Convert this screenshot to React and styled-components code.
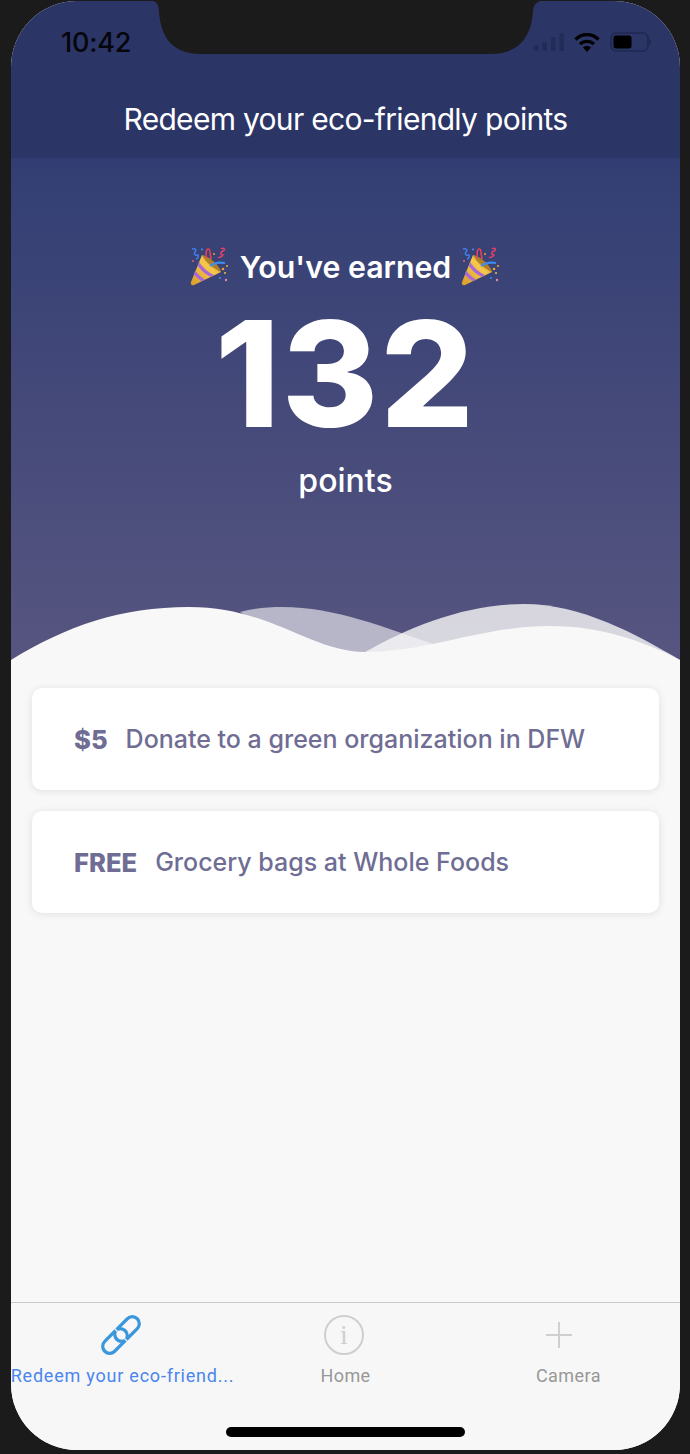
import React from 'react';
import styled, { createGlobalStyle } from 'styled-components';

const GlobalStyle = createGlobalStyle`
    html, body {
        margin: 0;
        padding: 0;
        background-color: #1b1b1b;
    }
`;

const Frame = styled.div`
    position: relative;
    width: 690px;
    height: 1454px;
    box-sizing: border-box;
    padding: 1px 10px 4px 11px;
    background-color: #1b1b1b;
    font-family: Inter, "Liberation Sans", sans-serif;
`;

const Screen = styled.div`
    position: relative;
    height: 100%;
    display: flex;
    flex-direction: column;
    overflow: hidden;
    border-radius: 66px;
    background-color: #f8f8f8;
`;

const Notch = styled.svg`
    position: absolute;
    top: -1px;
    left: 139px;
`;

const Header = styled.header`
    height: 157px;
    flex: none;
    box-sizing: border-box;
    background-color: #2b3566;
`;

const StatusBar = styled.div`
    height: 82px;
    display: flex;
    align-items: center;
    justify-content: space-between;
    box-sizing: border-box;
    padding: 0 28px 0 50px;
    margin-bottom: 16px;
`;

const Clock = styled.span`
    font-size: 27px;
    font-weight: 500;
    color: #05060c;
    letter-spacing: -0.2px;
`;

const StatusIcons = styled.div`
    display: flex;
    align-items: center;
    gap: 10px;
`;

const Title = styled.h1`
    margin: 0;
    text-align: center;
    color: #ffffff;
    font-size: 30px;
    line-height: 40px;
    font-weight: 400;
    letter-spacing: -0.7px;
`;

const Hero = styled.section`
    height: 502px;
    flex: none;
    display: flex;
    flex-direction: column;
    align-items: center;
    justify-content: space-between;
    background: linear-gradient(180deg, #323e73 0%, #575580 100%);
    color: #ffffff;
`;

const Summary = styled.div`
    display: flex;
    flex-direction: column;
    align-items: center;
    padding-top: 89px;
`;

const Earned = styled.div`
    display: flex;
    align-items: center;
    gap: 10px;
    height: 40px;
    font-size: 30.3px;
    font-weight: 600;
`;

const Points = styled.div`
    height: 150px;
    margin-top: 12px;
    font-size: 147px;
    line-height: 150px;
    font-weight: 800;
    letter-spacing: 2px;
`;

const PointsLabel = styled.div`
    margin-top: 12px;
    font-size: 32px;
    line-height: 40px;
    font-weight: 500;
`;

const Waves = styled.svg`
    display: block;
    flex: none;
`;

const Rewards = styled.main`
    flex: 1;
    display: flex;
    flex-direction: column;
    gap: 21px;
    padding: 28px 21px 0;
`;

const RewardCard = styled.div`
    height: 102px;
    display: flex;
    align-items: center;
    gap: 18px;
    box-sizing: border-box;
    padding-left: 42px;
    background-color: #ffffff;
    border-radius: 10px;
    box-shadow: 0 1px 8px rgba(0, 0, 0, 0.1);
    color: #6f6d93;
`;

const Price = styled.span`
    font-size: 25.6px;
    font-weight: 800;
`;

const Description = styled.span`
    font-size: 25px;
    font-weight: 500;
`;

const TabBar = styled.nav`
    position: relative;
    height: 148px;
    flex: none;
    display: grid;
    grid-template-columns: repeat(3, 1fr);
    box-sizing: border-box;
    border-top: 1px solid #c9c9c9;
    background-color: #f7f7f7;
`;

const Tab = styled.div`
    min-width: 0;
    display: flex;
    flex-direction: column;
    align-items: center;
    padding-top: 11px;
`;

const TabIcon = styled.div`
    height: 41px;
    display: flex;
    align-items: center;
    justify-content: center;
    margin-right: ${(props) => props.$nudge || 0}px;
`;

const TabLabel = styled.div`
    margin-top: 10px;
    font-family: Roboto, "Liberation Sans", sans-serif;
    font-size: 18px;
    line-height: 22px;
    letter-spacing: ${(props) => (props.$active ? '0.78px' : '0.45px')};
    white-space: nowrap;
    color: ${(props) => (props.$active ? '#4a86ee' : '#979797')};
`;

const InfoCircle = styled.div`
    width: 40px;
    height: 40px;
    display: flex;
    align-items: center;
    justify-content: center;
    box-sizing: border-box;
    border: 2px solid #cfcfcf;
    border-radius: 50%;
    color: #cfcfcf;
    font-family: "Liberation Serif", serif;
    font-size: 28px;
`;

const HomeIndicator = styled.div`
    position: absolute;
    left: 215px;
    bottom: 13px;
    width: 239px;
    height: 10px;
    border-radius: 5px;
    background-color: #000000;
`;

function PartyPopper() {
    return (
        <svg width="40" height="40" viewBox="0 0 40 40">
            <defs>
                <linearGradient id="cone" x1="0" y1="1" x2="1" y2="0">
                    <stop offset="0" stopColor="#d99b2b" />
                    <stop offset="0.6" stopColor="#f5c84a" />
                    <stop offset="1" stopColor="#c98a24" />
                </linearGradient>
            </defs>
            <path d="M1 35 C0 37 2 39 4 38 L31 25 C29 18 20 10 12 8 Z" fill="url(#cone)" />
            <path d="M5 24 C9 28 12 31 15 32.5 L11.5 34.2 C9 32.5 6 30 3.8 27.5 Z" fill="#a868d8" />
            <path d="M9 15 C13 21 19 26 24 28 L20.5 29.8 C15.5 27.5 11 23.5 7.8 19 Z" fill="#a868d8" />
            <path d="M12 8 C20 10 29 18 31 25 C24 22 15 15 12 8 Z" fill="#8a5a1c" opacity="0.6" />
            <path d="M20 19 C24 16 29 15 35 16" fill="none" stroke="#3f8cf0" strokeWidth="2" />
            <path d="M16 11 C17 8 15 6 17 3 C18 1 20 2 20 5 C20 8 21 10 21 12" fill="none" stroke="#e8405a" strokeWidth="1.6" />
            <path d="M2 2 C5 1 7 3 5 5 C3 7 6 9 8 8 C9 10 7 12 6 12" fill="none" stroke="#3f7fe8" strokeWidth="1.5" />
            <path d="M31 2 C34 0 36 3 33 4 C30 5 30 8 33 8 C32 10 29 11 28 10" fill="none" stroke="#e8406a" strokeWidth="1.5" />
            <circle cx="12" cy="2.5" r="1.1" fill="#3f8cf0" />
            <circle cx="24" cy="7" r="1" fill="#f0a030" />
            <circle cx="3" cy="14" r="1.1" fill="#d85a80" />
            <circle cx="33" cy="22" r="1.3" fill="#f0a030" />
            <circle cx="37" cy="19" r="1.1" fill="#f0a030" />
            <circle cx="30" cy="31" r="1" fill="#3f8cf0" />
            <circle cx="35" cy="26" r="1" fill="#f0c040" />
            <circle cx="36" cy="33" r="1.2" fill="#e888a8" />
        </svg>
    );
}

export default function App() {
    return (
        <Frame>
            <GlobalStyle />
            <Screen>
                <Header>
                    <StatusBar>
                        <Clock>10:42</Clock>
                        <StatusIcons>
                            {/* signal bars */}
                            <svg width="30" height="18" viewBox="0 0 30 18" fill="#222c58">
                                <rect x="0" y="12" width="4.5" height="6" rx="1.5" />
                                <rect x="8.5" y="9" width="4.5" height="9" rx="1.5" />
                                <rect x="17" y="4" width="4.5" height="14" rx="1.5" />
                                <rect x="25.5" y="0" width="4.5" height="18" rx="1.5" />
                            </svg>
                            {/* wifi */}
                            <svg width="26" height="20" viewBox="0 0 26 20">
                                <path d="M1.5 7.5 C8 1 18 1 24.5 7.5" fill="none" stroke="#000" strokeWidth="3.4" />
                                <path d="M6 12 C10 8.5 16 8.5 20 12" fill="none" stroke="#000" strokeWidth="3.4" />
                                <path d="M9 15.5 L13 20 L17 15.5 C15 13.5 11 13.5 9 15.5 Z" fill="#000" />
                            </svg>
                            {/* battery */}
                            <svg width="42" height="20" viewBox="0 0 42 20">
                                <rect x="1" y="1" width="37" height="18" rx="5" fill="none" stroke="#1f2850" strokeWidth="1.6" />
                                <rect x="3.5" y="3.5" width="18" height="13" rx="2.5" fill="#000" />
                                <path d="M39.5 7 C41.5 8 41.5 12 39.5 13 Z" fill="#1f2850" />
                            </svg>
                        </StatusIcons>
                    </StatusBar>
                    <Title>Redeem your eco-friendly points</Title>
                </Header>

                <Hero>
                    <Summary>
                        <Earned>
                            <PartyPopper />
                            <span>You've earned</span>
                            <PartyPopper />
                        </Earned>
                        <Points>132</Points>
                        <PointsLabel>points</PointsLabel>
                    </Summary>
                    <Waves width="669" height="60" viewBox="0 0 669 60">
                        <path
                            d="M229 12 C245 8 258 7 271 7 C325 7 375 28 425 45 L430 60 L300 60 Z"
                            fill="#f8f8f8"
                            opacity="0.6"
                        />
                        <path
                            d="M354 52 C400 26 455 4 513 4 C570 4 625 34 669 60 L354 60 Z"
                            fill="#f8f8f8"
                            opacity="0.8"
                        />
                        <path
                            d="M0 60 C55 26 110 7 178 7 C260 7 300 52 354 52 C420 52 470 26 540 26 C590 26 635 42 669 60 Z"
                            fill="#f8f8f8"
                        />
                    </Waves>
                </Hero>

                <Rewards>
                    <RewardCard>
                        <Price>$5</Price>
                        <Description>Donate to a green organization in DFW</Description>
                    </RewardCard>
                    <RewardCard>
                        <Price>FREE</Price>
                        <Description>Grocery bags at Whole Foods</Description>
                    </RewardCard>
                </Rewards>

                <TabBar>
                    <Tab>
                        <TabIcon $nudge={3}>
                            <svg width="42" height="42" viewBox="0 0 42 42" fill="none" stroke="#3a97dc" strokeWidth="3.2">
                                <rect x="20" y="0.5" width="14" height="29" rx="7" transform="rotate(45 27 15)" />
                                <rect x="8" y="12.5" width="14" height="29" rx="7" transform="rotate(45 15 27)" />
                                {/* thin breaks where the two links pass each other */}
                                <path d="M14.5 14.5 L17.5 17.5 M24.5 24.5 L27.5 27.5" stroke="#f7f7f7" strokeWidth="1.2" />
                            </svg>
                        </TabIcon>
                        <TabLabel $active>Redeem your eco-friend...</TabLabel>
                    </Tab>
                    <Tab>
                        <TabIcon $nudge={3}>
                            <InfoCircle>i</InfoCircle>
                        </TabIcon>
                        <TabLabel>Home</TabLabel>
                    </Tab>
                    <Tab>
                        <TabIcon $nudge={19}>
                            <svg width="28" height="28" viewBox="0 0 28 28" stroke="#cfcfcf" strokeWidth="2">
                                <path d="M14 1 V27 M1 14 H27" />
                            </svg>
                        </TabIcon>
                        <TabLabel>Camera</TabLabel>
                    </Tab>
                    <HomeIndicator />
                </TabBar>

                <Notch width="404" height="55" viewBox="0 0 404 55">
                    <path
                        d="M0 0 C6 1 9 4 9 12 C11 38 23 54 51 54 L340 54 C368 54 381 38 383 12 C383 5 386 2 393 0 Z"
                        fill="#1b1b1b"
                    />
                </Notch>
            </Screen>
        </Frame>
    );
}
